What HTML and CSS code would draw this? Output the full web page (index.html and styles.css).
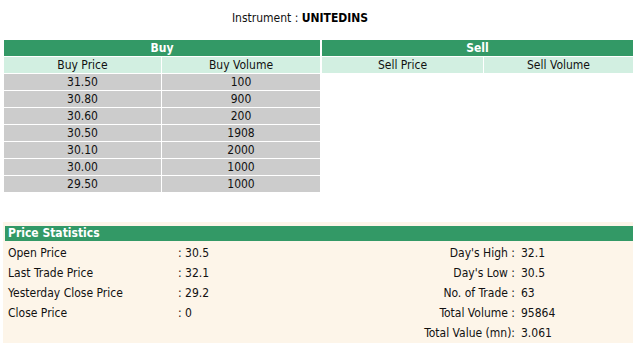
FILE: index.html
```html
<!DOCTYPE html>
<html>
<head>
<meta charset="utf-8">
<link rel="stylesheet" href="styles.css">
</head>
<body>
<div class="page">
  <div class="title">Instrument : <b>UNITEDINS</b></div>
  <div class="depth">
    <table class="book buy">
      <colgroup><col class="c1"><col class="c2"></colgroup>
      <tr><th colspan="2" class="side">Buy</th></tr>
      <tr><td class="sub">Buy Price</td><td class="sub">Buy Volume</td></tr>
      <tr><td class="cell">31.50</td><td class="cell">100</td></tr>
      <tr><td class="cell">30.80</td><td class="cell">900</td></tr>
      <tr><td class="cell">30.60</td><td class="cell">200</td></tr>
      <tr><td class="cell">30.50</td><td class="cell">1908</td></tr>
      <tr><td class="cell">30.10</td><td class="cell">2000</td></tr>
      <tr><td class="cell">30.00</td><td class="cell">1000</td></tr>
      <tr><td class="cell">29.50</td><td class="cell">1000</td></tr>
    </table>
    <table class="book sell">
      <colgroup><col class="c3"><col class="c4"></colgroup>
      <tr><th colspan="2" class="side">Sell</th></tr>
      <tr><td class="sub">Sell Price</td><td class="sub">Sell Volume</td></tr>
    </table>
  </div>
  <div class="stats">
    <div class="stats-head">Price Statistics</div>
    <table class="stats-table">
      <colgroup><col class="s1"><col class="s2"><col class="s3"><col class="s4"></colgroup>
      <tr><td class="lbl">Open Price</td><td class="val">: 30.5</td><td class="rlbl">Day's High :</td><td class="rval">32.1</td></tr>
      <tr><td class="lbl">Last Trade Price</td><td class="val">: 32.1</td><td class="rlbl">Day's Low :</td><td class="rval">30.5</td></tr>
      <tr><td class="lbl">Yesterday Close Price</td><td class="val">: 29.2</td><td class="rlbl">No. of Trade :</td><td class="rval">63</td></tr>
      <tr><td class="lbl">Close Price</td><td class="val">: 0</td><td class="rlbl">Total Volume :</td><td class="rval">95864</td></tr>
      <tr><td class="lbl"></td><td class="val"></td><td class="rlbl">Total Value (mn):</td><td class="rval">3.061</td></tr>
    </table>
  </div>
</div>
</body>
</html>
```
FILE: styles.css
```css
html, body {
  margin: 0;
  padding: 0;
  background: #ffffff;
}
body {
  font-family: "DejaVu Sans Condensed", "DejaVu Sans", sans-serif;
  font-size: 12px;
  color: #111;
  overflow: hidden;
}
.page {
  width: 633px;
  padding-left: 3px;
  box-sizing: border-box;
}
.title {
  height: 39px;
  box-sizing: border-box;
  padding-top: 10px;
  padding-right: 36px;
  line-height: 16px;
  text-align: center;
}
.title b {
  font-weight: bold;
  color: #000;
}
.depth {
  display: flex;
  align-items: flex-start;
  width: 630px;
  overflow: hidden;
}
.book {
  border-collapse: separate;
  border-spacing: 1px;
  table-layout: fixed;
  background: #ffffff;
  flex: none;
}
.buy { width: 318px; }
.sell { width: 313px; }
.c1 { width: 157px; }
.c2 { width: 158px; }
.c3 { width: 161px; }
.c4 { width: 149px; }
.book th, .book td {
  height: 16px;
  padding: 0;
  line-height: 16px;
  text-align: center;
  white-space: nowrap;
}
.side {
  background: #339966;
  color: #ffffff;
  font-weight: bold;
}
.sub {
  background: #d2efe1;
  color: #111;
}
.cell {
  background: #cccccc;
  color: #111;
}
.stats {
  margin-top: 29px;
  width: 630px;
  height: 121px;
  box-sizing: border-box;
  background: #fdf5e9;
  padding: 4px 0 0 2px;
}
.stats-head {
  height: 15px;
  line-height: 15px;
  background: #339966;
  color: #ffffff;
  font-weight: bold;
  padding-left: 3px;
  margin-bottom: 2px;
}
.stats-table {
  width: 628px;
  border-collapse: collapse;
  table-layout: fixed;
}
.s1 { width: 170px; }
.s2 { width: 192px; }
.s3 { width: 150px; }
.s4 { width: 116px; }
.stats-table td {
  height: 20px;
  padding: 0;
  line-height: 20px;
  white-space: nowrap;
}
.lbl { padding-left: 3px !important; }
.val { padding-left: 3px !important; }
.rlbl { text-align: right; padding-right: 2px !important; }
.rval { padding-left: 4px !important; }
```
